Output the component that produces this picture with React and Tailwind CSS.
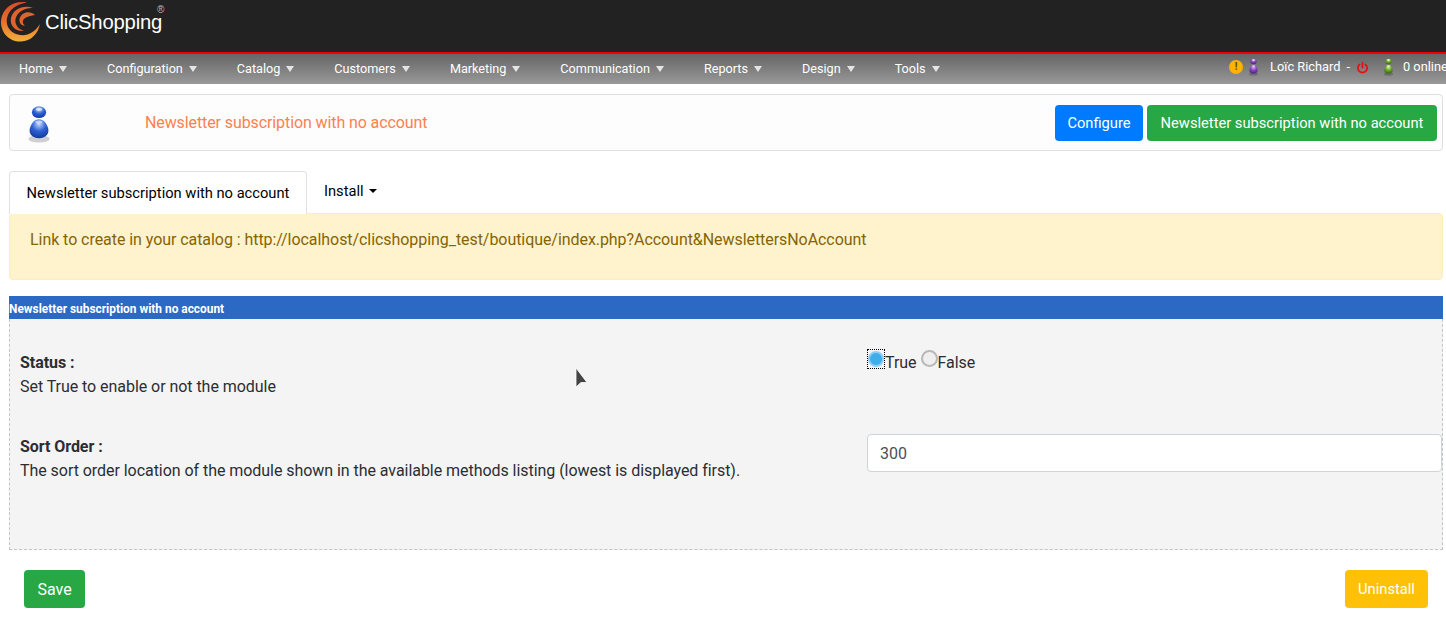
import { useId } from "react";

const menu = ["Home", "Configuration", "Catalog", "Customers", "Marketing", "Communication", "Reports", "Design", "Tools"];
const title = "Newsletter subscription with no account";

const Logo = () => (
  <svg width="41" height="41" viewBox="0 0 41 41" className="shrink-0">
    <defs>
      <linearGradient id="swirl" x1="0" y1="0" x2="0" y2="1">
        <stop offset="0" stopColor="#dc4a2a" />
        <stop offset="0.5" stopColor="#e8702a" />
        <stop offset="1" stopColor="#f3b03a" />
      </linearGradient>
    </defs>
    <path d="M27 1.500C15 -1 2 6 1 20C.5 32 10 41 21 40.500C31 40 38 33 40 23C35 31 28 35 20 34C10 32.500 5.500 25 7 17C9 8 17 3 27 1.500Z" fill="url(#swirl)" />
    <path d="M33 7C24 3.500 13 8 11 17C9.500 25 16 31 24 30C19 28.500 14.500 24 15.500 18C17 11 25 6.500 33 7Z" fill="#e4602c" />
    <path d="M35 14C30 9 21 11 19.500 18C19 22 21.500 25 25 24.500C22.500 23 22 19.500 24.500 17.500C27.500 15 31.500 15 35 14Z" fill="#d9662c" />
  </svg>
);

// little chess-pawn style figure used in the top bar and the page heading
const Pawn = ({ light, mid, dark, className }) => {
  const id = useId();
  return (
    <svg viewBox="0 0 14 20" preserveAspectRatio="none" className={className}>
      <defs>
        <radialGradient id={id} cx="0.5" cy="0.25" r="0.75">
          <stop offset="0" stopColor={light} />
          <stop offset="0.5" stopColor={mid} />
          <stop offset="1" stopColor={dark} />
        </radialGradient>
      </defs>
      <ellipse cx="7" cy="17.800" rx="5" ry="2" fill="#000" opacity="0.18" />
      <ellipse cx="7" cy="3.800" rx="3.300" ry="3.100" fill={`url(#${id})`} />
      <ellipse cx="7" cy="2.300" rx="1.500" ry="0.900" fill="#fff" opacity="0.6" />
      <path d="M7 7.500C4.800 7.500 3.600 9.500 2.800 12C2 14.800 3.600 17.500 7 17.500C10.400 17.500 12 14.800 11.200 12C10.400 9.500 9.200 7.500 7 7.500Z" fill={`url(#${id})`} />
      <ellipse cx="7" cy="9" rx="1.700" ry="0.900" fill="#fff" opacity="0.45" />
    </svg>
  );
};

const App = () => {
  return (
    <div className="relative h-[623px] w-[1446px] overflow-hidden bg-white font-['Roboto',sans-serif] text-[16px] text-[#212529]">
      {/* Header */}
      <div className="flex h-[54px] items-start border-b-2 border-[#f00000] bg-[#222222]">
        <div className="flex h-[42px] items-center pt-[1px]">
          <Logo />
          <span className="ml-[4px] font-['Liberation_Sans',sans-serif] text-[20.300px] leading-[16px] tracking-[-0.2px] text-white">ClicShopping</span>
          <span className="mb-[23px] -ml-[5px] font-['Liberation_Sans',sans-serif] text-[10px] leading-[8px] text-[#bbbbbb]">®</span>
        </div>
      </div>

      {/* Menu */}
      <div className="flex h-[30px] items-center justify-between bg-gradient-to-b from-[#666666] to-[#999999] text-[12.650px] text-white">
        <div className="flex gap-[40px] pl-[19px]">
          {menu.map((item) => (
            <div key={item} className="flex items-center gap-[6px]">
              <span>{item}</span>
              <span className="mt-[1px] h-0 w-0 border-x-[4px] border-t-[6px] border-x-transparent border-t-white opacity-80"></span>
            </div>
          ))}
        </div>
        <div className="flex shrink-0 items-center whitespace-nowrap pb-[4px] text-[12.800px]">
          <span className="flex h-[14px] w-[14px] items-center justify-center rounded-full bg-[#ffb300] text-[10px] font-bold leading-none text-[#5a4300]">!</span>
          <Pawn light="#d9b3f2" mid="#8a45c4" dark="#4a1d78" className="ml-[4px] h-[18px] w-[13px]" />
          <span className="ml-[10px]">Loïc Richard</span>
          <span className="ml-[6px]">-</span>
          <svg viewBox="0 0 24 24" className="ml-[6px] h-[13px] w-[13px]" fill="none" stroke="#e31414" strokeWidth="3.400" strokeLinecap="round">
            <path d="M12 3v9" />
            <path d="M6.500 6.500a8.500 8.500 0 1 0 11 0" />
          </svg>
          <Pawn light="#d6f0a8" mid="#6fa82c" dark="#35610f" className="ml-[13px] h-[18px] w-[13px]" />
          <span className="ml-[8px] w-[43px] overflow-hidden">0 online</span>
        </div>
      </div>

      {/* Page heading */}
      <div className="mx-[9px] mt-[10px] flex h-[57px] w-[1434px] items-center rounded-[4px] border border-[#dfdfdf] bg-[#fdfdfd] pr-[5px]">
        <div className="flex w-[135px] shrink-0 pl-[14px] pt-[3px]">
          <Pawn light="#c6d8fb" mid="#2f62d6" dark="#123a9c" className="h-[38px] w-[30px]" />
        </div>
        <span className="flex-1 tracking-[-0.1px] text-[#ff7f50]">{title}</span>
        <div className="flex gap-[4px] text-[14.700px] text-white">
          <div className="flex h-[36px] w-[88px] items-center justify-center rounded-[4px] bg-[#007bff] pt-[1px]">Configure</div>
          <div className="flex h-[36px] w-[290px] items-center justify-center rounded-[4px] bg-[#28a745] pt-[1px]">{title}</div>
        </div>
      </div>

      {/* Tabs */}
      <div className="ml-[9px] mt-[20px] flex h-[42px] items-start text-[14.700px] text-black">
        <div className="flex h-[43px] w-[298px] items-center justify-center rounded-t-[4px] border border-b-0 border-[#dee2e6] bg-white">{title}</div>
        <div className="ml-[17px] flex items-center gap-[5px] pt-[9px]">
          <span>Install</span>
          <span className="h-0 w-0 border-x-[4px] border-t-[4px] border-x-transparent border-t-black"></span>
        </div>
      </div>

      {/* Alert */}
      <div className="ml-[9px] h-[67px] w-[1434px] rounded-[4px] border border-[#ffeeba] bg-[#fff3cd] px-[20px] pt-[14px] tracking-[-0.06px] text-[#856404]">
        Link to create in your catalog : http://localhost/clicshopping_test/boutique/index.php?Account&amp;NewslettersNoAccount
      </div>

      {/* Module config */}
      <div className="ml-[9px] mt-[16px] w-[1434px]">
        <div className="flex h-[23px] items-center bg-[#2b69c4] pt-[4px] text-[11.900px] font-bold text-white">{title}</div>
        <div className="h-[231px] border border-t-0 border-dashed border-[#c4c4c4] bg-[#f4f4f4] pl-[10px] tracking-[-0.05px] text-[#2a2e33]">
          <div className="flex pt-[32px]">
            <div className="w-[847px] leading-[24px]">
              <div className="font-bold">Status :</div>
              <div>Set True to enable or not the module</div>
            </div>
            <div className="-mt-[1px] flex h-[24px] items-start leading-[24px]">
              <span className="-mt-[1px] flex h-[20px] w-[18px] items-center justify-center border border-dotted border-black">
                <span className="h-[16px] w-[16px] rounded-full border-2 border-[#8fcdf5] bg-[#3daee9]"></span>
              </span>
              <span className="pt-[1px]">True</span>
              <span className="ml-[4px] h-[17px] w-[17px] rounded-full border-2 border-[#b8b8b8] bg-[#efefef]"></span>
              <span className="pt-[1px]">False</span>
            </div>
          </div>
          <div className="flex pt-[35px]">
            <div className="w-[847px] pt-[1px] leading-[24px]">
              <div className="font-bold">Sort Order :</div>
              <div>The sort order location of the module shown in the available methods listing (lowest is displayed first).</div>
            </div>
            <div className="flex h-[38px] w-[575px] items-center rounded-[4px] border border-[#ced4da] bg-white px-[12px] pt-[1px] text-[#495057]">300</div>
          </div>
        </div>
      </div>

      {/* Footer buttons */}
      <div className="mt-[20px] flex justify-between pl-[24px] pr-[18px] text-white">
        <div className="flex h-[38px] w-[61px] items-center justify-center rounded-[4px] bg-[#28a745] pt-[1px]">Save</div>
        <div className="flex h-[38px] w-[83px] items-center justify-center rounded-[4px] bg-[#ffc107] pt-[1px] text-[14.700px]">Uninstall</div>
      </div>

      {/* Mouse pointer */}
      <svg viewBox="0 0 15 22" className="absolute left-[574px] top-[367px] h-[22px] w-[15px]">
        <path d="M2 1L2 20L7 15.500L13 15.500Z" fill="#444444" stroke="#ffffff" strokeWidth="0.800" />
      </svg>
    </div>
  );
};

export default App;
